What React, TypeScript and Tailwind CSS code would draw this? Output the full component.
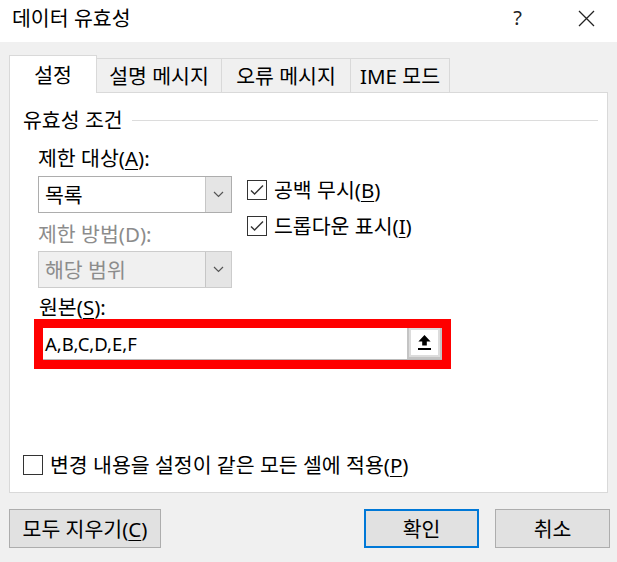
import type { ReactNode } from "react";

function Mn({ children }: { children: ReactNode }) {
  return <span className="underline decoration-1 underline-offset-[3px]">{children}</span>;
}

function Chevron() {
  return (
    <svg width="11" height="7" viewBox="0 0 11 7" fill="none">
      <path d="M1 1l4.5 4.5L10 1" stroke="#555555" strokeWidth="1.2" />
    </svg>
  );
}

function Select({ value, disabled }: { value: string; disabled?: boolean }) {
  return (
    <div
      className={`flex h-[37px] w-[194px] border ${
        disabled
          ? "border-[#cccccc] bg-[#f0f0f0] text-[#8c8c8c]"
          : "border-[#adadad] bg-white text-black"
      }`}
    >
      <div className="flex flex-1 items-center pl-[6px]">{value}</div>
      <div className="flex w-[26px] items-center justify-center border-l border-[#c6c6c6] bg-[#e5e5e5]">
        <Chevron />
      </div>
    </div>
  );
}

function Check({ checked, children }: { checked?: boolean; children: ReactNode }) {
  return (
    <div className="flex h-[20px] items-center">
      <div className="flex h-[20px] w-[20px] shrink-0 items-center justify-center border border-[#333333] bg-white">
        {checked && (
          <svg width="18" height="18" viewBox="0 0 18 18" fill="none">
            <path d="M3 9.5l3.6 3.6L15 4.6" stroke="#333333" strokeWidth="1.4" />
          </svg>
        )}
      </div>
      <span className="ml-[7px] whitespace-nowrap">{children}</span>
    </div>
  );
}

export default function App() {
  return (
    <div className="flex h-[562px] w-[617px] flex-col overflow-hidden bg-[#f0f0f0] font-['Noto_Sans','Noto_Sans_CJK_KR',sans-serif] text-[20.5px] leading-[24px] text-black">
      {/* 제목 표시줄 */}
      <div className="flex h-[42px] items-start bg-white pl-[12px] pt-[6px]">
        <span>데이터 유효성</span>
        <span className="ml-auto text-[20px] text-[#222222]">?</span>
        <div className="ml-[56px] mr-[22px] flex h-[24px] items-center">
          <svg width="17" height="17" viewBox="0 0 17 17" fill="none">
            <path d="M1 1l15 15M16 1L1 16" stroke="#222222" strokeWidth="1.3" />
          </svg>
        </div>
      </div>

      <div className="flex flex-1 flex-col px-[9px]">
        {/* 탭 */}
        <div className="relative z-10 mt-[13px] flex h-[37px] items-end">
          <div className="-mb-px flex h-[38px] w-[88px] items-center justify-center border-l border-r border-t border-[#d9d9d9] bg-white">
            설정
          </div>
          <div className="flex h-[34px] w-[125px] items-center justify-center border-r border-t border-[#d9d9d9]">
            설명 메시지
          </div>
          <div className="flex h-[34px] w-[129px] items-center justify-center border-r border-t border-[#d9d9d9]">
            오류 메시지
          </div>
          <div className="flex h-[34px] w-[99px] items-center justify-center border-r border-t border-[#d9d9d9]">
            IME 모드
          </div>
        </div>

        {/* 설정 패널 */}
        <div className="flex h-[401px] flex-col border border-[#d9d9d9] bg-white pl-[13px] pt-[15px]">
          <div className="flex items-center pr-[9px]">
            <span>유효성 조건</span>
            <div className="ml-[9px] h-px flex-1 bg-[#dcdcdc]" />
          </div>

          <div className="ml-[15px] flex flex-col">
            <div className="mt-[14px]">
              제한 대상(<Mn>A</Mn>):
            </div>
            <div className="mt-[6px] flex">
              <div className="flex flex-col">
                <Select value="목록" />
                <div className="mt-[9px] text-[#8c8c8c]">제한 방법(D):</div>
                <div className="mt-[5px]">
                  <Select value="해당 범위" disabled />
                </div>
              </div>
              <div className="ml-[15px] flex flex-col gap-[16px] pt-[4px]">
                <Check checked>
                  공백 무시(<Mn>B</Mn>)
                </Check>
                <Check checked>
                  드롭다운 표시(<Mn>I</Mn>)
                </Check>
              </div>
            </div>

            <div className="ml-px mt-[7px]">
              원본(<Mn>S</Mn>):
            </div>
            <div className="-ml-[4px] w-[417px] border-[9px] border-[#ff0000]">
              <div className="flex h-[32px] border-b border-[#b9b9b9] bg-white">
                <div className="flex flex-1 items-center pl-[2px] text-[18.5px]">A,B,C,D,E,F</div>
                <div className="flex w-[35px] border-b-[2px] border-l-[2px] border-r-[2px] border-[#c4c4c4] bg-[#dcdcdc] p-[2px]">
                  <div className="flex flex-1 items-center justify-center bg-white">
                    <svg width="15" height="17" viewBox="0 0 15 17">
                      <path d="M7.5 1L13.6 7.6H9.8V11.6H5.2V7.6H1.4Z" fill="#000000" />
                      <rect x="1" y="14" width="13" height="2" fill="#000000" />
                    </svg>
                  </div>
                </div>
              </div>
            </div>
          </div>

          <div className="mt-auto pb-[17px]">
            <Check>
              변경 내용을 설정이 같은 모든 셀에 적용(<Mn>P</Mn>)
            </Check>
          </div>
        </div>

        {/* 버튼 */}
        <div className="mt-[16px] flex">
          <button
            type="button"
            className="flex h-[39px] w-[152px] items-center justify-center border border-[#adadad] bg-[#e1e1e1]"
          >
            모두 지우기(<Mn>C</Mn>)
          </button>
          <div className="-mr-[2px] ml-auto flex gap-[16px]">
            <button
              type="button"
              className="flex h-[39px] w-[115px] items-center justify-center border-2 border-[#0078d7] bg-[#e1e1e1]"
            >
              확인
            </button>
            <button
              type="button"
              className="flex h-[39px] w-[115px] items-center justify-center border border-[#adadad] bg-[#e1e1e1]"
            >
              취소
            </button>
          </div>
        </div>
      </div>
    </div>
  );
}
